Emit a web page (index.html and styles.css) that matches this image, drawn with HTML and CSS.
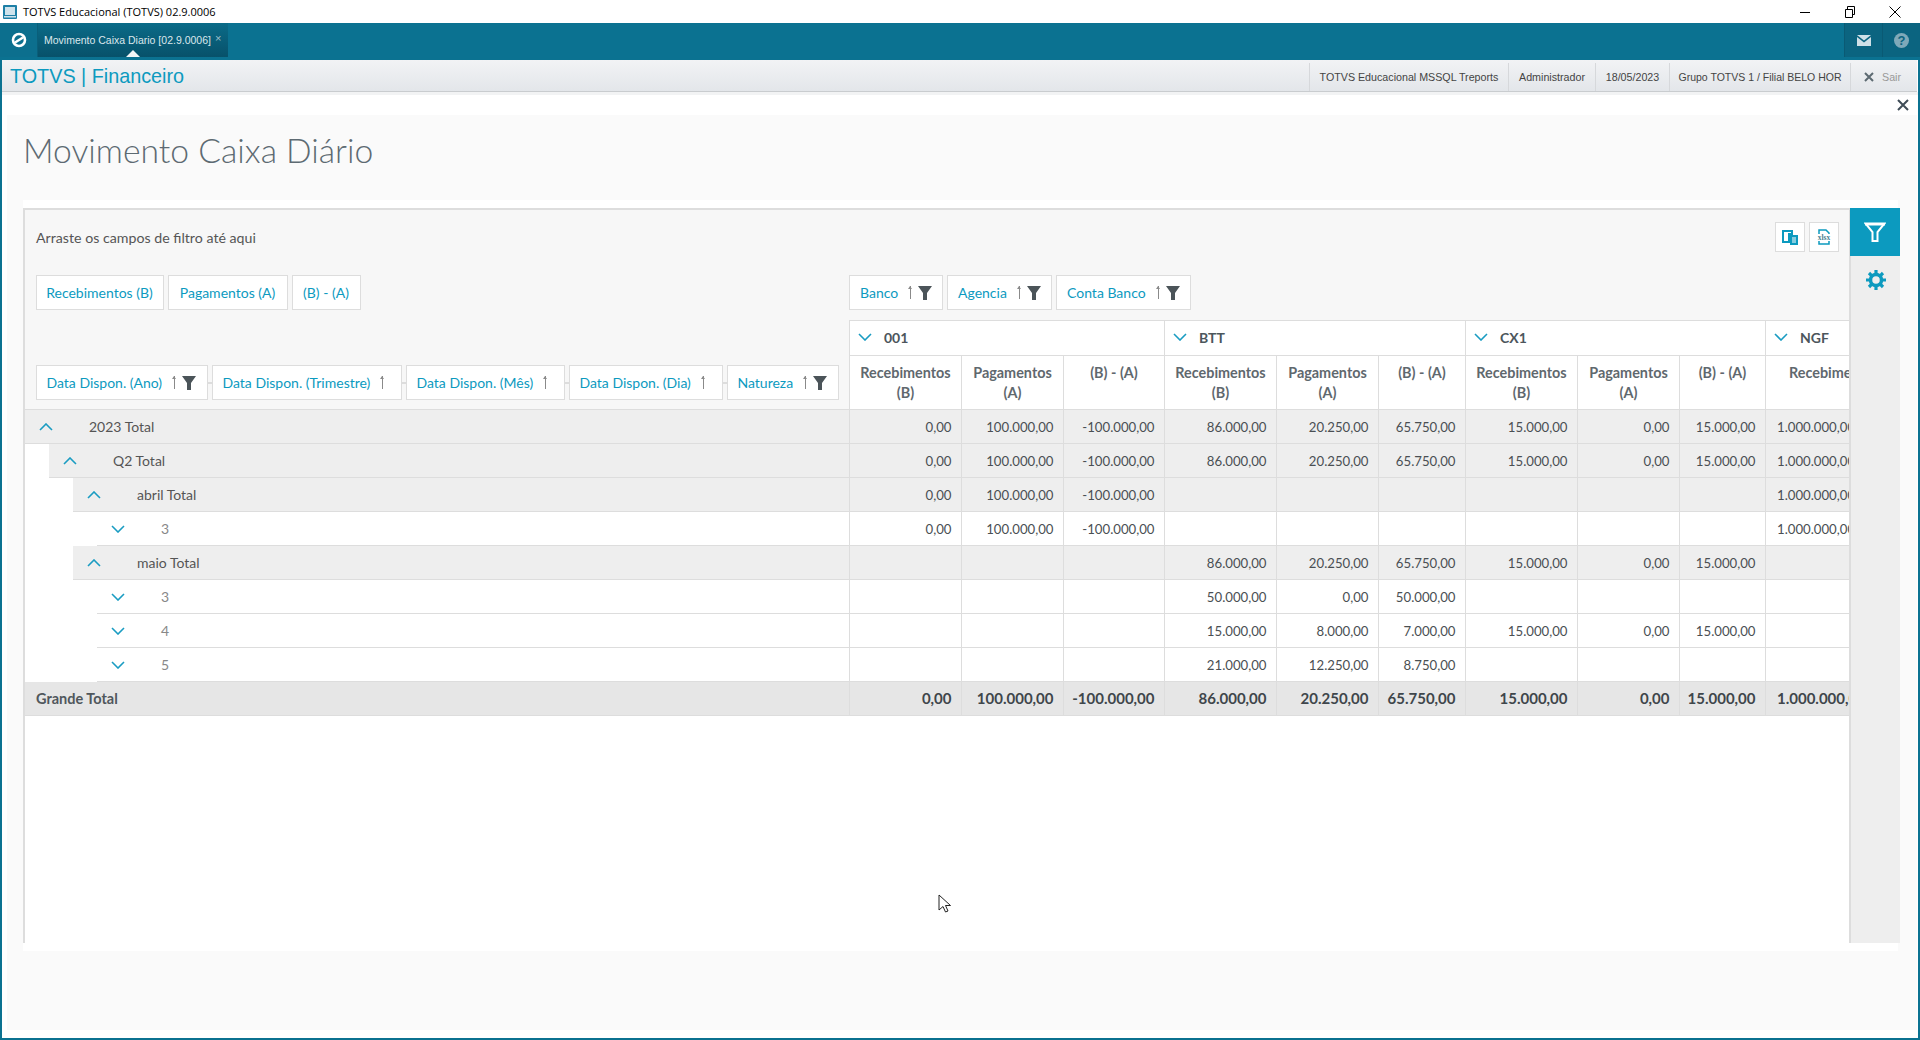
FILE: index.html
```html
<!DOCTYPE html>
<html lang="pt">
<head>
<meta charset="utf-8">
<title>TOTVS Educacional</title>
<link rel="stylesheet" href="styles.css">
</head>
<body>
<svg class="defs" width="0" height="0">
  <symbol id="i-funnel" viewBox="0 0 14 14"><path d="M0 0h14L9 7v7H5V7z"/></symbol>
  <symbol id="i-up" viewBox="0 0 14 8"><path d="M1 7l6-6 6 6" fill="none" stroke="#1a9cc2" stroke-width="1.600"/></symbol>
  <symbol id="i-down" viewBox="0 0 14 8"><path d="M1 1l6 6 6-6" fill="none" stroke="#1a9cc2" stroke-width="1.600"/></symbol>
</svg>
<div class="window">
  <header class="titlebar">
    <svg class="app-icon" width="14" height="14" viewBox="0 0 14 14"><rect width="14" height="14" rx="1" fill="#1d7fa6"/><rect x="2" y="2" width="10" height="8" fill="#cfe3ec"/><rect x="1" y="11" width="12" height="1.500" fill="#cfe3ec"/></svg>
    <span class="app-title">TOTVS Educacional (TOTVS) 02.9.0006</span>
    <div class="winctl">
      <span class="winbtn"><svg width="10" height="10" viewBox="0 0 10 10"><path d="M0 5.500h10" stroke="#000" fill="none"/></svg></span>
      <span class="winbtn"><svg width="10" height="12" viewBox="0 0 10 12"><path d="M.5 3.500h7v8h-7zM2.500 3.500v-3h7v8h-2" stroke="#000" fill="none"/></svg></span>
      <span class="winbtn"><svg width="12" height="12" viewBox="0 0 12 12"><path d="M.5.500l11 11M11.500.500l-11 11" stroke="#000" fill="none"/></svg></span>
    </div>
  </header>
  <div class="frame">
    <nav class="tabbar">
      <div class="home-btn">
        <svg width="16" height="16" viewBox="0 0 16 16"><circle cx="8" cy="8" r="6" fill="none" stroke="#fff" stroke-width="2.600"/><path d="M4 10.500L12 5.500" stroke="#fff" stroke-width="2.600" fill="none"/></svg>
      </div>
      <div class="tab">
        <span class="tab-label">Movimento Caixa Diario [02.9.0006]</span>
        <span class="tab-close">×</span>
        <span class="tab-caret"></span>
      </div>
      <div class="tabbar-right">
        <div class="tb-btn"><svg width="14" height="11" viewBox="0 0 14 11"><path d="M0 0h14L7 5.500zM0 2l7 5.500L14 2v9H0z" fill="#cfe0e7"/></svg></div>
        <div class="tb-btn"><svg width="15" height="15" viewBox="0 0 15 15"><circle cx="7.500" cy="7.500" r="7.500" fill="#7fa9b9"/><text x="7.500" y="12" text-anchor="middle" class="qmark">?</text></svg></div>
      </div>
    </nav>
    <div class="appbar">
      <div class="brand">TOTVS | Financeiro</div>
      <div class="ctx">
        <span class="ctx-item w1">TOTVS Educacional MSSQL Treports</span>
        <span class="ctx-item w2">Administrador</span>
        <span class="ctx-item w3">18/05/2023</span>
        <span class="ctx-item w4">Grupo TOTVS 1 / Filial BELO HOR</span>
        <span class="ctx-item ctx-exit"><svg width="10" height="10" viewBox="0 0 10 10"><path d="M1 1l8 8M9 1l-8 8" stroke="#5d6a72" stroke-width="2" fill="none"/></svg><span>Sair</span></span>
      </div>
    </div>
    <div class="closebar">
      <svg width="12" height="12" viewBox="0 0 12 12"><path d="M1 1l10 10M11 1L1 11" stroke="#3f4c57" stroke-width="2" fill="none"/></svg>
    </div>
    <main class="page">
      <h1 class="page-title">Movimento Caixa Diário</h1>
      <div class="content">
        <section class="pivot">
          <div class="filter-zone">
            <span class="drop-hint">Arraste os campos de filtro até aqui</span>
            <div class="exports">
              <button class="icon-btn"><svg width="17" height="15" viewBox="0 0 17 15"><path d="M1 1h9v3H7v8H1z" fill="none" stroke="#0c9abf" stroke-width="2"/><path d="M8 5h8v10H8z" fill="#0c9abf"/><path d="M10 8h4M10 10h4M10 12h4" stroke="#fff"/></svg></button>
              <button class="icon-btn"><svg width="18" height="18" viewBox="0 0 18 18"><path d="M4 6V2h7l3 3v1M4 13v3h10v-3" fill="none" stroke="#0c9abf" stroke-width="1.500"/><text x="9" y="12" text-anchor="middle" class="xlsx">xlsx</text></svg></button>
            </div>
          </div>
          <div class="config-row">
            <div class="measure-pills">
              <span class="pill m1">Recebimentos (B)</span>
              <span class="pill m2">Pagamentos (A)</span>
              <span class="pill m3">(B) - (A)</span>
            </div>
            <div class="col-pills">
              <span class="pill c1">Banco<i class="arr"></i><svg class="funnel"><use href="#i-funnel"/></svg></span>
              <span class="pill c2">Agencia<i class="arr"></i><svg class="funnel"><use href="#i-funnel"/></svg></span>
              <span class="pill c3">Conta Banco<i class="arr"></i><svg class="funnel"><use href="#i-funnel"/></svg></span>
            </div>
          </div>
          <div class="grid">
            <div class="head-row">
              <div class="pivot-corner">
                <span class="pill r1">Data Dispon. (Ano)<i class="arr"></i><svg class="funnel"><use href="#i-funnel"/></svg></span><span class="link"></span>
                <span class="pill r2">Data Dispon. (Trimestre)<i class="arr"></i></span><span class="link"></span>
                <span class="pill r3">Data Dispon. (Mês)<i class="arr"></i></span><span class="link"></span>
                <span class="pill r4">Data Dispon. (Dia)<i class="arr"></i></span><span class="link"></span>
                <span class="pill r5">Natureza<i class="arr"></i><svg class="funnel"><use href="#i-funnel"/></svg></span>
              </div>
              <div class="head-cols">
                <div class="group-row cols">
                  <div class="group span3"><svg class="chev"><use href="#i-down"/></svg><span>001</span></div>
                  <div class="group span3"><svg class="chev"><use href="#i-down"/></svg><span>BTT</span></div>
                  <div class="group span3"><svg class="chev"><use href="#i-down"/></svg><span>CX1</span></div>
                  <div class="group"><svg class="chev"><use href="#i-down"/></svg><span>NGF</span></div>
                </div>
                <div class="col-heads cols">
                  <div class="col-head">Recebimentos<br>(B)</div><div class="col-head">Pagamentos<br>(A)</div><div class="col-head">(B) - (A)</div>
                  <div class="col-head">Recebimentos<br>(B)</div><div class="col-head">Pagamentos<br>(A)</div><div class="col-head">(B) - (A)</div>
                  <div class="col-head">Recebimentos<br>(B)</div><div class="col-head">Pagamentos<br>(A)</div><div class="col-head">(B) - (A)</div>
                  <div class="col-head ngf">Recebimentos</div>
                </div>
              </div>
            </div>
            <div class="row sub">
              <div class="row-label"><svg class="chev"><use href="#i-up"/></svg><span>2023 Total</span></div>
              <div class="cells cols"><div class="cell">0,00</div><div class="cell">100.000,00</div><div class="cell">-100.000,00</div><div class="cell">86.000,00</div><div class="cell">20.250,00</div><div class="cell">65.750,00</div><div class="cell">15.000,00</div><div class="cell">0,00</div><div class="cell">15.000,00</div><div class="cell">1.000.000,00</div></div>
            </div>
            <div class="row sub">
              <div class="row-label lv1"><svg class="chev"><use href="#i-up"/></svg><span>Q2 Total</span></div>
              <div class="cells cols"><div class="cell">0,00</div><div class="cell">100.000,00</div><div class="cell">-100.000,00</div><div class="cell">86.000,00</div><div class="cell">20.250,00</div><div class="cell">65.750,00</div><div class="cell">15.000,00</div><div class="cell">0,00</div><div class="cell">15.000,00</div><div class="cell">1.000.000,00</div></div>
            </div>
            <div class="row sub">
              <div class="row-label lv2"><svg class="chev"><use href="#i-up"/></svg><span>abril Total</span></div>
              <div class="cells cols"><div class="cell">0,00</div><div class="cell">100.000,00</div><div class="cell">-100.000,00</div><div class="cell"></div><div class="cell"></div><div class="cell"></div><div class="cell"></div><div class="cell"></div><div class="cell"></div><div class="cell">1.000.000,00</div></div>
            </div>
            <div class="row leaf">
              <div class="row-label lv3"><svg class="chev"><use href="#i-down"/></svg><span>3</span></div>
              <div class="cells cols"><div class="cell">0,00</div><div class="cell">100.000,00</div><div class="cell">-100.000,00</div><div class="cell"></div><div class="cell"></div><div class="cell"></div><div class="cell"></div><div class="cell"></div><div class="cell"></div><div class="cell">1.000.000,00</div></div>
            </div>
            <div class="row sub">
              <div class="row-label lv2"><svg class="chev"><use href="#i-up"/></svg><span>maio Total</span></div>
              <div class="cells cols"><div class="cell"></div><div class="cell"></div><div class="cell"></div><div class="cell">86.000,00</div><div class="cell">20.250,00</div><div class="cell">65.750,00</div><div class="cell">15.000,00</div><div class="cell">0,00</div><div class="cell">15.000,00</div><div class="cell"></div></div>
            </div>
            <div class="row leaf">
              <div class="row-label lv3"><svg class="chev"><use href="#i-down"/></svg><span>3</span></div>
              <div class="cells cols"><div class="cell"></div><div class="cell"></div><div class="cell"></div><div class="cell">50.000,00</div><div class="cell">0,00</div><div class="cell">50.000,00</div><div class="cell"></div><div class="cell"></div><div class="cell"></div><div class="cell"></div></div>
            </div>
            <div class="row leaf">
              <div class="row-label lv3"><svg class="chev"><use href="#i-down"/></svg><span>4</span></div>
              <div class="cells cols"><div class="cell"></div><div class="cell"></div><div class="cell"></div><div class="cell">15.000,00</div><div class="cell">8.000,00</div><div class="cell">7.000,00</div><div class="cell">15.000,00</div><div class="cell">0,00</div><div class="cell">15.000,00</div><div class="cell"></div></div>
            </div>
            <div class="row leaf">
              <div class="row-label lv3"><svg class="chev"><use href="#i-down"/></svg><span>5</span></div>
              <div class="cells cols"><div class="cell"></div><div class="cell"></div><div class="cell"></div><div class="cell">21.000,00</div><div class="cell">12.250,00</div><div class="cell">8.750,00</div><div class="cell"></div><div class="cell"></div><div class="cell"></div><div class="cell"></div></div>
            </div>
            <div class="row grand">
              <div class="row-label"><span>Grande Total</span></div>
              <div class="cells cols"><div class="cell">0,00</div><div class="cell">100.000,00</div><div class="cell">-100.000,00</div><div class="cell">86.000,00</div><div class="cell">20.250,00</div><div class="cell">65.750,00</div><div class="cell">15.000,00</div><div class="cell">0,00</div><div class="cell">15.000,00</div><div class="cell">1.000.000,00</div></div>
            </div>
          </div>
        </section>
        <aside class="side">
          <button class="side-filter"><svg width="22" height="20" viewBox="0 0 22 20"><path d="M1.500 1.500h19L13.500 10v9h-5v-9z" fill="none" stroke="#fff" stroke-width="2"/><path d="M1 1h20v2.500H1z" fill="#fff"/></svg></button>
          <button class="side-gear"><svg width="20" height="20" viewBox="0 0 20 20"><circle cx="10" cy="10" r="5.500" fill="none" stroke="#0c9abf" stroke-width="3.500"/><path d="M10 0v4M10 16v4M0 10h4M16 10h4M3 3l2.800 2.800M14.200 14.200L17 17M17 3l-2.800 2.800M5.800 14.200L3 17" stroke="#0c9abf" stroke-width="3.200"/></svg></button>
        </aside>
      </div>
    </main>
    <div class="bottom"></div>
  </div>
  <svg class="cursor" width="14" height="20" viewBox="0 0 14 20"><path d="M1 1v15l4-3.500 2.500 5.500 2.500-1-2.500-5.500h5z" fill="#fff" stroke="#222"/></svg>
</div>
</body>
</html>
```
FILE: styles.css
```css
* { box-sizing: border-box; }
html, body { margin: 0; height: 100%; overflow: hidden; }
body { font-family: "Lato", "Open Sans", sans-serif; background: #fff; color: #444; }
.defs { position: absolute; }
.window { width: 1920px; height: 1040px; display: flex; flex-direction: column; position: relative; overflow: hidden; }
.titlebar { height: 23px; display: flex; align-items: center; padding-left: 3px; background: #fff; flex: none; }
.app-title { font-family: "Open Sans", sans-serif; font-size: 11px; color: #000; margin-left: 6px; }
.winctl { margin-left: auto; display: flex; align-items: center; padding-right: 3px; }
.winbtn { width: 45px; display: flex; justify-content: center; }
.frame { flex: 1; display: flex; flex-direction: column; border: solid #0b7291; border-width: 0 2px 2px; min-height: 0; }
.tabbar { height: 37px; margin: 0 -2px; background: #0b7291; display: flex; flex: none; }
.home-btn { width: 38px; height: 34px; display: flex; align-items: center; justify-content: center; background: #0c6f8e; border-right: 1px solid #0a5f7a; }
.tab { width: 190px; height: 34px; background: linear-gradient(#0b6b88, #07516a); display: flex; align-items: center; padding-left: 6px; gap: 4px; position: relative; }
.tab-label { font-family: "Liberation Sans", sans-serif; font-size: 10.500px; color: #dbe7ec; margin-top: -1px; white-space: nowrap; }
.tab-close { color: #9fc0cc; font-size: 11px; font-family: "Liberation Sans", sans-serif; margin-top: -4px; }
.tab-caret { position: absolute; left: 88px; bottom: 0; border: 7px solid transparent; border-top: 0; border-bottom-color: #f4f6f7; }
.tabbar-right { margin-left: auto; display: flex; }
.tb-btn { width: 38px; height: 34px; background: #0b6480; border-left: 1px solid #0a5a74; display: flex; align-items: center; justify-content: center; }
.qmark { font-size: 13px; font-weight: 700; fill: #0b6480; font-family: "Liberation Sans", sans-serif; }
.appbar { height: 32px; flex: none; display: flex; align-items: center; padding-left: 8px; background: linear-gradient(#f2f3f5, #e3e6ea); border-bottom: 1px solid #c9cccf; margin-right: 1px; }
.brand { font-family: "Liberation Sans", sans-serif; font-size: 19.800px; color: #0c9abf; padding-top: 2px; }
.ctx { margin-left: auto; display: flex; height: 28px; align-items: stretch; margin-top: 2px; }
.ctx-item { font-family: "Liberation Sans", sans-serif; font-size: 10.700px; color: #444; display: flex; align-items: center; justify-content: center; border-left: 1px solid #d6d8db; white-space: nowrap; }
.w1 { width: 199px; }
.w2 { width: 87px; }
.w3 { width: 74px; }
.w4 { width: 181px; font-size: 10.500px; }
.ctx-exit { width: 67px; justify-content: flex-start; gap: 8px; color: #999; padding-left: 13px; }
.closebar { height: 23px; flex: none; display: flex; justify-content: flex-end; align-items: center; padding: 0 9px 0 0; border-top: 3px solid #f2f3f4; background: #fff; }
.page { flex: 1; min-height: 0; display: flex; flex-direction: column; background: #fafafa; margin: 0 1px 0 5px; }
.page-title { flex: none; height: 85px; margin: 0; padding: 12px 0 0 16px; font-weight: 300; font-size: 33.700px; line-height: 46px; color: #5d6a72; }
.content { flex: none; width: 1891px; display: flex; background: linear-gradient(#fff, #fff) no-repeat 16px 0 / 100% 100%; padding: 8px 0 8px 16px; height: 751px; }
.pivot { width: 1826px; flex: none; border-left: 2px solid #ddd; border-top: 2px solid #ddd; background: #fff; display: flex; flex-direction: column; overflow: hidden; }
.filter-zone { height: 65px; flex: none; background: #f7f7f7; display: flex; justify-content: space-between; padding: 15px 10px 0 11px; }
.drop-hint { font-size: 14.200px; color: #555; line-height: 26px; }
.exports { display: flex; gap: 4px; margin-top: -3px; }
.icon-btn { width: 30px; height: 30px; padding: 0; border: 1px solid #ddd; background: #fff; display: flex; align-items: center; justify-content: center; }
.xlsx { font-family: "Liberation Serif", serif; font-size: 7.500px; font-weight: 700; fill: #4a7f92; }
.config-row { height: 45px; flex: none; background: #f7f7f7; display: flex; }
.measure-pills { width: 824px; flex: none; display: flex; padding-left: 10.500px; gap: 4px; }
.col-pills { display: flex; gap: 4px; }
.pill { height: 35px; border: 1px solid #ddd; background: #fff; color: #0c9abf; font-size: 14px; display: inline-flex; align-items: center; padding: 0 10px; white-space: nowrap; flex: none; }
.m1 { width: 128px; justify-content: center; padding: 0; }
.m2 { width: 120px; justify-content: center; padding: 0; }
.m3 { width: 69px; justify-content: center; padding: 0; }
.arr { display: block; width: 1px; height: 13px; background: #8a8a8a; margin: 0 7px 0 12px; position: relative; flex: none; }
.arr::before { content: ""; position: absolute; left: -2px; top: 0; border: 2.500px solid transparent; border-top: 0; border-bottom: 3px solid #8a8a8a; }
.funnel { width: 14px; height: 14px; fill: #4b5459; flex: none; }
.c1 { width: 94px; }
.c2 { width: 105px; }
.c3 { width: 135px; }
.r1 { width: 172px; }
.r2 { width: 190px; }
.r3 { width: 159px; }
.r4 { width: 154px; }
.r5 { width: 112px; }
.grid { flex: 1; min-height: 0; background: #fff; }
.cols { display: grid; grid-template-columns: 112px 102px 101px 112px 102px 87px 112px 102px 86px 112px; }
.head-row { display: flex; height: 90px; }
.pivot-corner { width: 824px; flex: none; background: #f7f7f7; display: flex; padding: 45px 0 0 10.500px; align-items: flex-start; border-bottom: 1px solid #ddd; }
.link { width: 4px; height: 2px; background: #ddd; margin-top: 17px; flex: none; }
.head-cols { flex: 1; min-width: 0; overflow: hidden; background: #fff; }
.group-row { height: 36px; }
.span3 { grid-column: span 3; }
.group { display: flex; align-items: center; gap: 12px; padding: 0 0 2px 8px; border: solid #ddd; border-width: 1px 0 1px 1px; font-size: 14px; font-weight: 700; color: #4c565c; white-space: nowrap; }
.chev { width: 14px; height: 8px; flex: none; }
.col-heads { height: 54px; }
.col-head { padding: 7px 0 0; text-align: center; font-size: 14.400px; font-weight: 700; line-height: 20px; color: #5f686e; border-left: 1px solid #ddd; border-bottom: 1px solid #ddd; white-space: nowrap; overflow: hidden; }
.ngf { text-align: left; padding-left: 23px; }
.row { display: flex; height: 34px; }
.row-label { width: 824px; flex: none; height: 34px; display: flex; align-items: center; font-size: 14px; color: #555; padding-left: 14px; border-bottom: 1px solid #ddd; }
.row-label span { margin-left: 36px; }
.sub .row-label { background: #eee; }
.lv1 { width: 800px; margin-left: 24px; }
.lv2 { width: 776px; margin-left: 48px; }
.lv3 { width: 752px; margin-left: 72px; }
.leaf .row-label span { color: #888; }
.cells { flex: 1; min-width: 0; overflow: hidden; }
.cell { height: 34px; text-align: right; padding: 0 9.500px 0 0; line-height: 34px; font-size: 13.200px; color: #4a4f53; border-left: 1px solid #ddd; border-bottom: 1px solid #ddd; white-space: nowrap; }
.cell:nth-child(10) { text-align: left; padding: 0 0 0 11px; }
.sub .cell { background: #eee; }
.grand .row-label, .grand .cell { background: #e6e6e6; font-weight: 700; color: #50575c; }
.grand .row-label { padding-left: 0; font-size: 14.500px; }
.grand .row-label span { margin-left: 11px; }
.grand .cell { font-size: 15px; color: #3f464b; line-height: 33px; }
.side { width: 51px; flex: none; background: #eee; border-left: 2px solid #ddd; display: flex; flex-direction: column; }
.side-filter { width: 50px; height: 48px; margin-left: -1px; border: 0; padding: 0; background: #0c9abf; display: flex; align-items: center; justify-content: center; }
.side-gear { width: 49px; height: 48px; border: 0; padding: 0; background: transparent; display: flex; align-items: center; justify-content: center; }
.bottom { height: 8px; flex: none; background: #fff; }
.cursor { position: absolute; left: 938px; top: 894px; }
```
